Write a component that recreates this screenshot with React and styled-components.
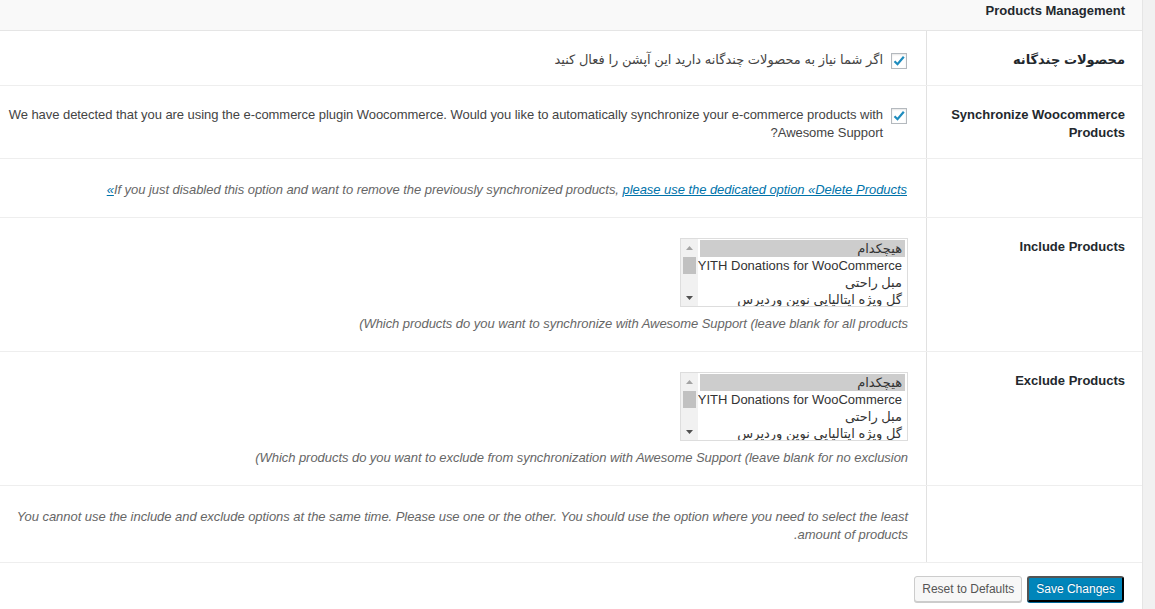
import React from 'react';
import styled, { createGlobalStyle } from 'styled-components';

const GlobalStyle = createGlobalStyle`
	html, body {
		margin: 0;
		padding: 0;
		background: #f1f1f1;
	}
	body {
		font-family: "Liberation Sans", "DejaVu Sans", sans-serif;
		font-size: 13px;
		line-height: 18px;
		color: #444;
	}
`;

const Page = styled.div`
	width: 1155px;
	height: 609px;
	overflow: hidden;
	display: flex;
	flex-direction: row;
`;

const Panel = styled.div`
	direction: rtl;
	width: 1142px;
	background: #fff;
	border-right: 1px solid #e5e5e5;
	display: flex;
	flex-direction: column;
`;

const Header = styled.div`
	background: #f9f9f9;
	border-bottom: 1px solid #e5e5e5;
	padding: 2px 17px 10px;
	font-weight: bold;
	color: #23282d;
`;

const Row = styled.div`
	display: grid;
	grid-template-columns: 216px 1fr;
	border-bottom: 1px solid #eee;
`;

const Label = styled.div`
	border-left: 1px solid #e1e1e1;
	padding: ${({$pad}) => $pad || '20px 17px 16px 8px'};
	font-weight: bold;
	color: #23282d;
`;

const Cell = styled.div`
	padding: ${({$pad}) => $pad || '20px 19px 16px 8px'};
	letter-spacing: -0.05px;
`;

const CheckLine = styled.label`
	display: flex;
	align-items: flex-start;
	gap: 8px;
`;

const Check = styled.span`
	flex: none;
	width: 14px;
	height: 14px;
	margin-top: 2px;
	border: 1px solid #b4b9be;
	background: #fff;
	box-shadow: inset 0 1px 2px rgba(0, 0, 0, 0.1);
	display: flex;
	align-items: center;
	justify-content: center;
`;

const Desc = styled.p`
	margin: 0;
	font-style: italic;
	color: #666;
`;

const Visual = styled.span`
	direction: ltr;
	unicode-bidi: bidi-override;
`;

const Link = styled.a`
	color: #0073aa;
	text-decoration: underline;
`;

const ListBox = styled.div`
	width: 226px;
	height: 67px;
	border: 1px solid #ddd;
	display: flex;
	flex-direction: row;
	margin-bottom: 8px;
	background: #fff;
	font-size: 13px;
	line-height: 17px;
	letter-spacing: 0;
	color: #333;
`;

const Options = styled.div`
	flex: 1;
	padding: 1px 2px 0 2px;
	overflow: hidden;
`;

const Option = styled.div`
	padding: 0 3px;
	height: 17px;
	white-space: nowrap;
	background: ${({$selected}) => ($selected ? '#cdcdcd' : 'transparent')};
`;

const Scroll = styled.div`
	flex: none;
	width: 17px;
	background: #f1f1f1;
	display: flex;
	flex-direction: column;
	align-items: center;
`;

const Arrow = styled.div`
	height: 17px;
	width: 17px;
	display: flex;
	align-items: center;
	justify-content: center;
`;

const Thumb = styled.div`
	width: 13px;
	height: 17px;
	background: #c1c1c1;
	margin-top: 1px;
`;

const Spacer = styled.div`
	flex: 1;
`;

const Footer = styled.div`
	display: flex;
	flex-direction: row;
	gap: 5px;
	padding: 13px 18px;
`;

const Button = styled.button`
	height: 26px;
	padding: 0 7px 1px;
	font-family: "Liberation Sans", "DejaVu Sans", sans-serif;
	font-size: 12px;
	border-radius: 3px;
	border: 1px solid ${({$primary}) => ($primary ? '#0073aa #006799 #006799' : '#ccc')};
	background: ${({$primary}) => ($primary ? '#0085ba' : '#f7f7f7')};
	color: ${({$primary}) => ($primary ? '#fff' : '#555')};
	box-shadow: ${({$primary}) => ($primary ? '0 1px 0 #006799' : '0 1px 0 #ccc')};
	text-shadow: ${({$primary}) => ($primary ? '0 -1px 1px #006799' : 'none')};
	cursor: pointer;
`;

const CheckIcon = () => (
	<svg width="12" height="12" viewBox="0 0 12 12">
		<path d="M1.5 6.2 L4.5 9.2 L10.8 1.8" fill="none" stroke="#1e8cbe" strokeWidth="2.2" />
	</svg>
);

const products = [
	'هیچکدام',
	'YITH Donations for WooCommerce',
	'مبل راحتی',
	'گل ویژه ایتالیایی نوین وردپرس',
];

const ProductList = () => (
	<ListBox>
		<Options>
			{products.map((p, i) => (
				<Option key={p} $selected={i === 0}>{p}</Option>
			))}
		</Options>
		<Scroll>
			<Arrow>
				<svg width="7" height="4" viewBox="0 0 7 4"><path d="M0 4 L3.5 0 L7 4z" fill="#a3a3a3" /></svg>
			</Arrow>
			<Thumb />
			<Spacer />
			<Arrow>
				<svg width="7" height="4" viewBox="0 0 7 4"><path d="M0 0 L3.5 4 L7 0z" fill="#505050" /></svg>
			</Arrow>
		</Scroll>
	</ListBox>
);

const App = () => {
	return (
		<Page>
			<GlobalStyle />
			<Panel>
				<Header>Products Management</Header>
				<Row>
					<Label>محصولات چندگانه</Label>
					<Cell>
						<CheckLine>
							<Check><CheckIcon /></Check>
							<span>اگر شما نیاز به محصولات چندگانه دارید این آپشن را فعال کنید</span>
						</CheckLine>
					</Cell>
				</Row>
				<Row>
					<Label>Synchronize Woocommerce Products</Label>
					<Cell>
						<CheckLine>
							<Check><CheckIcon /></Check>
							<span>We have detected that you are using the e-commerce plugin Woocommerce. Would you like to automatically synchronize your e-commerce products with Awesome Support?</span>
						</CheckLine>
					</Cell>
				</Row>
				<Row>
					<Label $pad="22px 17px 18px 8px" />
					<Cell $pad="22px 19px 18px 8px">
						<Desc>
							If you just disabled this option and want to remove the previously synchronized products, <Link href="#">please use the dedicated option «Delete Products»</Link>
						</Desc>
					</Cell>
				</Row>
				<Row>
					<Label>Include Products</Label>
					<Cell $pad="20px 18px 18px 8px">
						<ProductList />
						<Desc><Visual>(Which products do you want to synchronize with Awesome Support (leave blank for all products</Visual></Desc>
					</Cell>
				</Row>
				<Row>
					<Label>Exclude Products</Label>
					<Cell $pad="20px 18px 18px 8px">
						<ProductList />
						<Desc><Visual>(Which products do you want to exclude from synchronization with Awesome Support (leave blank for no exclusion</Visual></Desc>
					</Cell>
				</Row>
				<Row>
					<Label $pad="22px 17px 18px 8px" />
					<Cell $pad="22px 18px 18px 8px">
						<Desc>You cannot use the include and exclude options at the same time. Please use one or the other. You should use the option where you need to select the least amount of products.</Desc>
					</Cell>
				</Row>
				<Footer>
					<Button $primary>Save Changes</Button>
					<Button>Reset to Defaults</Button>
				</Footer>
			</Panel>
		</Page>
	);
};

export default App;
